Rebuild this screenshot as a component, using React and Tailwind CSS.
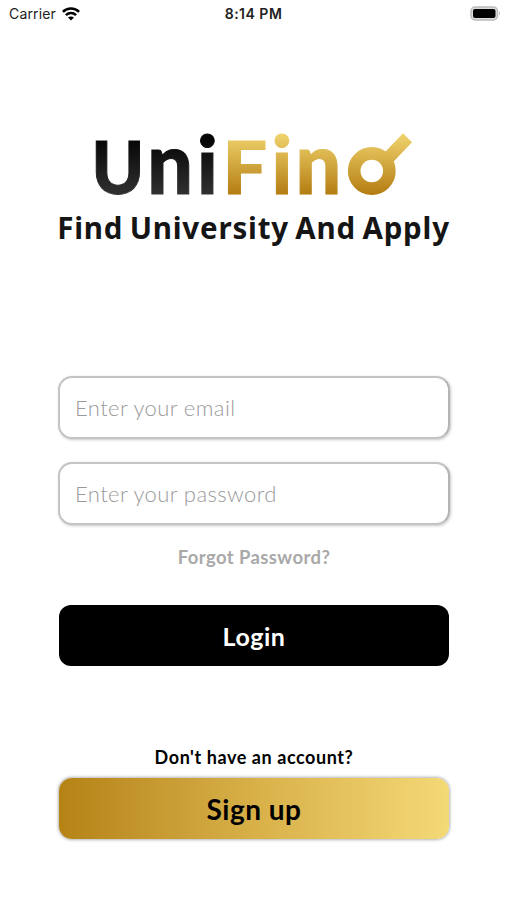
import React from "react";

const letters = [
  { ch: "U", x: 91.5, size: 73, sx: 0.97, fill: "url(#ink)" },
  { ch: "n", x: 147.2, size: 85, sx: 0.95, fill: "url(#ink)" },
  { ch: "i", x: 197, size: 80, sx: 1, fill: "url(#ink)" },
  { ch: "F", x: 222.5, size: 73, sx: 1.08, fill: "url(#gold)" },
  { ch: "i", x: 271.5, size: 80, sx: 1, fill: "url(#gold)" },
  { ch: "n", x: 295.5, size: 85, sx: 0.95, fill: "url(#gold)" },
];

function Logo() {
  return (
    <svg className="block h-[130px] w-[507px]" viewBox="0 95 507 130" role="img" aria-label="UniFind">
      <defs>
        <linearGradient id="ink" x1="0" y1="-56" x2="0" y2="0" gradientUnits="userSpaceOnUse">
          <stop offset="0" stopColor="#050505" />
          <stop offset="1" stopColor="#303030" />
        </linearGradient>
        <linearGradient id="gold" x1="0" y1="-60" x2="0" y2="0" gradientUnits="userSpaceOnUse">
          <stop offset="0" stopColor="#f0d36e" />
          <stop offset="1" stopColor="#b47d12" />
        </linearGradient>
      </defs>
      {letters.map((l, i) => (
        <text
          key={i}
          transform={`translate(${l.x} 194) scale(${l.sx} 1)`}
          fontSize={l.size}
          fill={l.fill}
          stroke={l.fill}
          strokeWidth="1"
          className="font-['Lato',sans-serif] font-black"
        >
          {l.ch}
        </text>
      ))}
      <g transform="translate(0 194.3)">
        <circle cx="371.8" cy="-23.3" r="17.6" fill="none" stroke="url(#gold)" strokeWidth="12.6" />
        <path d="M383 -40 L403 -61 L412 -52 L392 -31 Z" fill="url(#gold)" />
      </g>
    </svg>
  );
}

function StatusBar() {
  return (
    <header className="grid h-[27px] grid-cols-3 items-center pl-[9px] pr-[6px] font-['Inter',sans-serif] text-[14px] text-[#222]">
      <div className="flex items-center gap-[6px]">
        <span className="tracking-[0.15px]">Carrier</span>
        <svg className="h-[14px] w-[18px]" viewBox="0 0 18 14" fill="none" stroke="#000" strokeWidth="2.5">
          <path d="M0.9 4.9 C5.4 0.4 12.6 0.4 17.1 4.9" />
          <path d="M3.9 8.1 C6.8 5.3 11.2 5.3 14.1 8.1" />
          <path d="M9 13.6 L6 10.6 C7.6 9.1 10.4 9.1 12 10.6 Z" fill="#000" stroke="none" />
        </svg>
      </div>
      <span className="-ml-[3px] text-center font-semibold tracking-[0.5px]">8:14 PM</span>
      <svg className="h-[15px] w-[31px] justify-self-end" viewBox="0 0 31 15">
        <rect x="1" y="1" width="26.5" height="13" rx="4" fill="#ddd" stroke="#bbb" strokeWidth="1.5" />
        <rect x="3" y="3" width="22.5" height="9" rx="2" fill="#000" />
        <path d="M29 5.3 Q31 7.5 29 9.7 Z" fill="#bbb" />
      </svg>
    </header>
  );
}

function Field({ type, label }) {
  return (
    <input
      type={type}
      placeholder={label}
      className="block h-[63px] w-full rounded-[14px] border-2 border-[#c4c4c4] border-r-[#b4b4b4] bg-white px-[15px] font-['Lato',sans-serif] text-[22px] font-light tracking-[0.4px] shadow-[1px_1px_3px_rgba(0,0,0,0.22)] placeholder:text-[#9a9a9a]"
    />
  );
}

export default function App() {
  return (
    <main className="flex h-[900px] w-[507px] flex-col overflow-hidden bg-white">
      <StatusBar />
      <div className="mt-[68px]">
        <Logo />
      </div>
      <h1 className="-mt-[15px] h-[36px] whitespace-nowrap text-center font-['Noto_Sans',sans-serif] text-[29.5px] font-bold leading-[36px] tracking-[0.8px] text-[#151515] [word-spacing:-2px]">
        Find University And Apply
      </h1>
      <form className="mt-[130px] flex flex-col px-[58px] pr-[57px] font-['Lato',sans-serif]">
        <div className="flex flex-col gap-[23px]">
          <Field type="email" label="Enter your email" />
          <Field type="password" label="Enter your password" />
        </div>
        <a className="mt-[20px] h-[24px] text-center text-[18.5px] font-bold leading-[24px] tracking-[0.4px] text-[#a9a9a9]">
          Forgot Password?
        </a>
        <button type="button" className="mx-px mt-[36px] h-[61px] rounded-[12px] bg-black pt-[2px] text-[25px] font-bold tracking-[0.5px] text-white">
          Login
        </button>
        <p className="mt-[79px] h-[24px] text-center text-[18px] font-bold leading-[24px] tracking-[0.57px] text-black">
          Don't have an account?
        </p>
        <button type="button" className="mx-px mt-[9px] h-[61px] rounded-[13px] bg-linear-to-r from-[#b58314] via-[#d8b048] to-[#f4d977] pt-[1px] text-[28px] font-bold tracking-[0.5px] text-black shadow-[0_0_3px_1px_rgba(0,0,0,0.3)]">
          Sign up
        </button>
      </form>
    </main>
  );
}
